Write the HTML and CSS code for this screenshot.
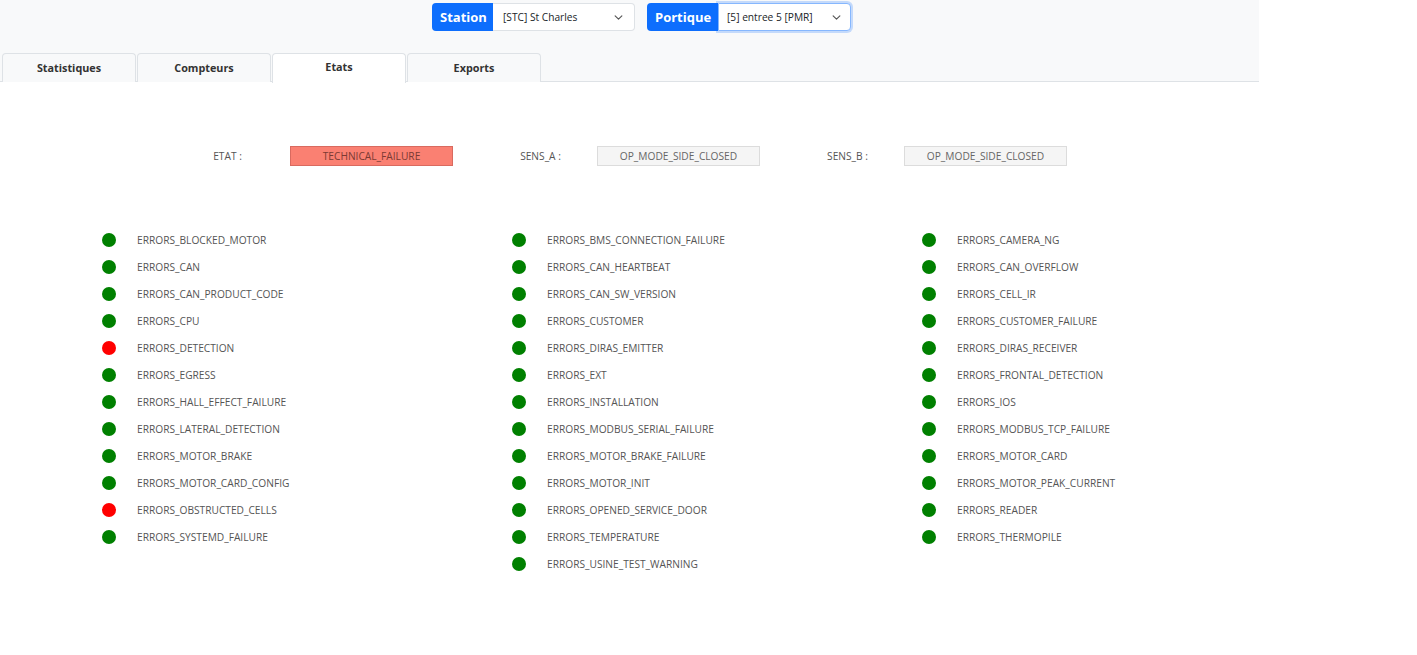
FILE: index.html
```html
<!DOCTYPE html>
<html lang="fr">
<head>
<meta charset="utf-8">
<title>Etats</title>
<link rel="stylesheet" href="styles.css">
</head>
<body>
<div class="app">
  <header class="header">
    <div class="selectors">
      <div class="igroup station">
        <span class="ilabel">Station</span>
        <div class="select">
          <span>[STC] St Charles</span>
          <svg class="chev" viewBox="0 0 16 16" width="9" height="9"><path d="M2 5l6 6 6-6" fill="none" stroke="#555" stroke-width="2" stroke-linecap="round" stroke-linejoin="round"/></svg>
        </div>
      </div>
      <div class="igroup portique">
        <span class="ilabel">Portique</span>
        <div class="select focus">
          <span>[5] entree 5 [PMR]</span>
          <svg class="chev" viewBox="0 0 16 16" width="9" height="9"><path d="M2 5l6 6 6-6" fill="none" stroke="#555" stroke-width="2" stroke-linecap="round" stroke-linejoin="round"/></svg>
        </div>
      </div>
    </div>
    <nav class="tabs">
      <div class="tab">Statistiques</div>
      <div class="tab">Compteurs</div>
      <div class="tab active">Etats</div>
      <div class="tab">Exports</div>
    </nav>
  </header>

  <section class="etats">
    <div class="etat-row">
      <div class="etat-item">
        <span class="elabel">ETAT :</span>
        <span class="ebox fail">TECHNICAL_FAILURE</span>
      </div>
      <div class="etat-item">
        <span class="elabel">SENS_A :</span>
        <span class="ebox">OP_MODE_SIDE_CLOSED</span>
      </div>
      <div class="etat-item">
        <span class="elabel">SENS_B :</span>
        <span class="ebox">OP_MODE_SIDE_CLOSED</span>
      </div>
    </div>

    <div class="errors">
      <ul class="col">
        <li><i class="dot ok"></i>ERRORS_BLOCKED_MOTOR</li>
        <li><i class="dot ok"></i>ERRORS_CAN</li>
        <li><i class="dot ok"></i>ERRORS_CAN_PRODUCT_CODE</li>
        <li><i class="dot ok"></i>ERRORS_CPU</li>
        <li><i class="dot ko"></i>ERRORS_DETECTION</li>
        <li><i class="dot ok"></i>ERRORS_EGRESS</li>
        <li><i class="dot ok"></i>ERRORS_HALL_EFFECT_FAILURE</li>
        <li><i class="dot ok"></i>ERRORS_LATERAL_DETECTION</li>
        <li><i class="dot ok"></i>ERRORS_MOTOR_BRAKE</li>
        <li><i class="dot ok"></i>ERRORS_MOTOR_CARD_CONFIG</li>
        <li><i class="dot ko"></i>ERRORS_OBSTRUCTED_CELLS</li>
        <li><i class="dot ok"></i>ERRORS_SYSTEMD_FAILURE</li>
      </ul>
      <ul class="col">
        <li><i class="dot ok"></i>ERRORS_BMS_CONNECTION_FAILURE</li>
        <li><i class="dot ok"></i>ERRORS_CAN_HEARTBEAT</li>
        <li><i class="dot ok"></i>ERRORS_CAN_SW_VERSION</li>
        <li><i class="dot ok"></i>ERRORS_CUSTOMER</li>
        <li><i class="dot ok"></i>ERRORS_DIRAS_EMITTER</li>
        <li><i class="dot ok"></i>ERRORS_EXT</li>
        <li><i class="dot ok"></i>ERRORS_INSTALLATION</li>
        <li><i class="dot ok"></i>ERRORS_MODBUS_SERIAL_FAILURE</li>
        <li><i class="dot ok"></i>ERRORS_MOTOR_BRAKE_FAILURE</li>
        <li><i class="dot ok"></i>ERRORS_MOTOR_INIT</li>
        <li><i class="dot ok"></i>ERRORS_OPENED_SERVICE_DOOR</li>
        <li><i class="dot ok"></i>ERRORS_TEMPERATURE</li>
        <li><i class="dot ok"></i>ERRORS_USINE_TEST_WARNING</li>
      </ul>
      <ul class="col">
        <li><i class="dot ok"></i>ERRORS_CAMERA_NG</li>
        <li><i class="dot ok"></i>ERRORS_CAN_OVERFLOW</li>
        <li><i class="dot ok"></i>ERRORS_CELL_IR</li>
        <li><i class="dot ok"></i>ERRORS_CUSTOMER_FAILURE</li>
        <li><i class="dot ok"></i>ERRORS_DIRAS_RECEIVER</li>
        <li><i class="dot ok"></i>ERRORS_FRONTAL_DETECTION</li>
        <li><i class="dot ok"></i>ERRORS_IOS</li>
        <li><i class="dot ok"></i>ERRORS_MODBUS_TCP_FAILURE</li>
        <li><i class="dot ok"></i>ERRORS_MOTOR_CARD</li>
        <li><i class="dot ok"></i>ERRORS_MOTOR_PEAK_CURRENT</li>
        <li><i class="dot ok"></i>ERRORS_READER</li>
        <li><i class="dot ok"></i>ERRORS_THERMOPILE</li>
      </ul>
    </div>
  </section>
</div>
</body>
</html>
```
FILE: styles.css
```css
* { box-sizing: border-box; }
html, body { margin: 0; padding: 0; background: #fff; }
body {
  font-family: "Open Sans", "Noto Sans", "Liberation Sans", sans-serif;
  color: #555;
}
.app { width: 1259px; }

.header {
  background: #f8f9fa;
  border-bottom: 1px solid #dee2e6;
  height: 82px;
  padding-top: 3px;
}
.selectors {
  display: flex;
  gap: 12px;
  padding-left: 432px;
}
.igroup {
  display: flex;
  height: 28px;
}
.ilabel {
  background: #0d6efd;
  color: #fff;
  font-weight: 700;
  font-size: 13px;
  display: flex;
  align-items: center;
  padding: 0 8px;
  border-radius: 4px 0 0 4px;
}
.station .ilabel { width: 61px; }
.portique .ilabel { width: 71px; }
.select {
  background: #fff;
  border: 1px solid #dee2e6;
  border-left: none;
  border-radius: 0 4px 4px 0;
  display: flex;
  align-items: center;
  justify-content: space-between;
  padding: 0 11px 0 10px;
  font-size: 10.2px;
  color: #212529;
}
.station .select { width: 142px; }
.portique .select { width: 133px; padding-left: 8px; padding-right: 9px; }
.select.focus {
  border: 1px solid #86b7fe;
  box-shadow: 0 0 0 2px rgba(13,110,253,0.22);
}
.chev { display: block; }

.tabs {
  display: flex;
  gap: 1px;
  margin-top: 22px;
  padding-left: 2px;
}
.tab {
  width: 134px;
  height: 29px;
  padding-bottom: 2px;
  border: 1px solid #dee2e6;
  border-bottom: none;
  border-radius: 4px 4px 0 0;
  background: #f8f9fa;
  display: flex;
  align-items: center;
  justify-content: center;
  font-weight: 700;
  font-size: 10.8px;
  color: #333;
}
.tab.active { background: #fff; height: 30px; padding-bottom: 4px; }

.etats { padding-top: 64px; }
.etat-row {
  display: flex;
  padding-left: 165px;
  gap: 19px;
  height: 20px;
}
.etat-item {
  display: flex;
  align-items: center;
}
.elabel {
  width: 125px;
  flex: none;
  text-align: center;
  font-size: 10.2px;
  color: #555;
}
.etat-item + .etat-item .elabel { padding-left: 12px; }
.ebox {
  width: 163px;
  height: 20px;
  flex: none;
  display: flex;
  align-items: center;
  justify-content: center;
  font-size: 10.2px;
  background: #f5f5f5;
  border: 1px solid #dcdcdc;
  color: #666;
}
.ebox.fail {
  background: #fa8072;
  border-color: #d96a5f;
  color: #7a3a33;
}

.errors {
  display: grid;
  grid-template-columns: 410px 410px 410px;
  padding-left: 102px;
  margin-top: 60px;
}
.col {
  list-style: none;
  margin: 0;
  padding: 0;
}
.col li {
  display: flex;
  align-items: center;
  height: 27px;
  font-size: 10.2px;
  color: #555;
}
.dot {
  width: 14px;
  height: 14px;
  border-radius: 50%;
  margin-right: 21px;
  flex: none;
}
.dot.ok { background: #008000; }
.dot.ko { background: #ff0000; }
```
